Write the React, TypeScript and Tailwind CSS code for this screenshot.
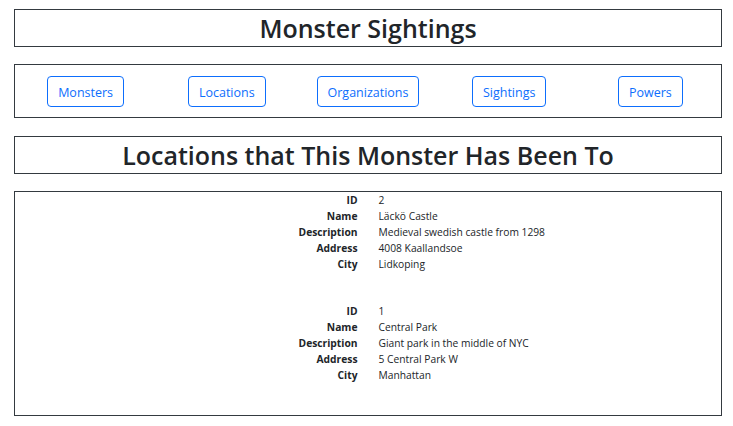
import React from "react";

void React;

const NAV = ["Monsters", "Locations", "Organizations", "Sightings", "Powers"];

const LOCATIONS = [
  {
    id: 2,
    name: "Läckö Castle",
    description: "Medieval swedish castle from 1298",
    address: "4008 Kaallandsoe",
    city: "Lidkoping",
  },
  {
    id: 1,
    name: "Central Park",
    description: "Giant park in the middle of NYC",
    address: "5 Central Park W",
    city: "Manhattan",
  },
];

function Field({ label, value }: { label: string; value: string | number }) {
  return (
    <>
      <div className="text-right font-bold">{label}</div>
      <div>{value}</div>
    </>
  );
}

export default function App() {
  return (
    <div className="min-h-[426px] bg-white pt-[9px] pr-[11px] pb-[10px] pl-[14px] font-['Open_Sans',sans-serif] text-[#212529]">
      <div className="flex h-[38px] items-center justify-center border border-[#343a40]">
        <h1 className="text-[25px] leading-none font-semibold">Monster Sightings</h1>
      </div>

      <nav className="mt-[17px] grid h-[54px] grid-cols-5 items-center justify-items-center border border-[#343a40]">
        {NAV.map((item) => (
          <button
            key={item}
            className="h-[31px] rounded-[4px] border border-[#0d6efd] px-[10px] pt-[2px] text-[12.5px] leading-[27px] text-[#0d6efd]"
          >
            {item}
          </button>
        ))}
      </nav>

      <div className="mt-[18px] flex h-[38px] items-center justify-center border border-[#343a40]">
        <h2 className="text-[25px] leading-none font-semibold">Locations that This Monster Has Been To</h2>
      </div>

      <div className="mt-[17px] h-[225px] border border-[#343a40] text-[10.25px] leading-[16px]">
        {LOCATIONS.map((loc) => (
          <div key={loc.id} className="mb-[31px] grid grid-cols-2 gap-x-[21px]">
            <Field label="ID" value={loc.id} />
            <Field label="Name" value={loc.name} />
            <Field label="Description" value={loc.description} />
            <Field label="Address" value={loc.address} />
            <Field label="City" value={loc.city} />
          </div>
        ))}
      </div>
    </div>
  );
}
